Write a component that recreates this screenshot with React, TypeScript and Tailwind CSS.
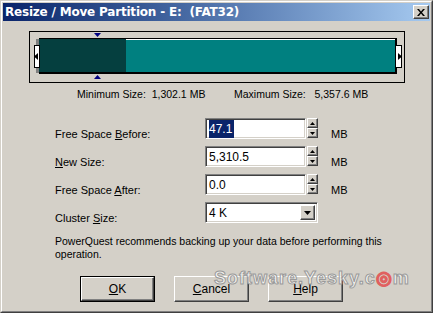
const raised = "border border-t-white border-l-white border-r-[#404040] border-b-[#404040] shadow-[inset_-1px_-1px_0_#808080,inset_1px_1px_0_#d4d0c8]";
const sunken = "border border-t-[#808080] border-l-[#808080] border-r-white border-b-white shadow-[inset_1px_1px_0_#404040,inset_-1px_-1px_0_#d4d0c8]";

const Spinner = () => (
    <div className="flex flex-col ml-[1px]">
        <div className={`${raised} w-[11px] h-[10px] bg-[#d4d0c8] flex items-center justify-center`}>
            <svg width="5" height="3" viewBox="0 0 5 3"><path d="M2.5 0L5 3H0z" fill="#000"/></svg>
        </div>
        <div className={`${raised} w-[11px] h-[10px] bg-[#d4d0c8] flex items-center justify-center`}>
            <svg width="5" height="3" viewBox="0 0 5 3"><path d="M0 0H5L2.5 3z" fill="#000"/></svg>
        </div>
    </div>
);

const SpinRow = ({label, value, selected}: {label: [string, string, string]; value: string; selected?: boolean}) => (
    <div className="flex items-start h-[21px]">
        <div className="w-[150px] mt-[8px]">
            {label[0]}<span className="underline">{label[1]}</span>{label[2]}
        </div>
        <div className={`${sunken} w-[101px] h-[21px] bg-white flex items-center pl-[3px] text-[12px]`}>
            <span className={selected ? "bg-[#0a246a] text-white pr-[2px]" : ""}>{value}</span>
        </div>
        <Spinner/>
        <span className="ml-[13px] mt-[8px]">MB</span>
    </div>
);

const Btn = ({first, rest, def}: {first: string; rest: string; def?: boolean}) => (
    <div className={def ? "border border-black" : ""}>
        <div className={`${raised} ${def ? "w-[73px] h-[24px]" : "w-[75px] h-[26px]"} flex items-center justify-center text-[12px]`}>
            <span className="underline">{first}</span>{rest}
        </div>
    </div>
);

const App = () => {
    return (
        <div className="w-[433px] h-[313px] border border-t-[#d4d0c8] border-l-[#d4d0c8] border-r-[#404040] border-b-[#404040] bg-[#d4d0c8] font-['Liberation_Sans',Arial,sans-serif] text-[11px] text-black relative overflow-hidden">
            <div className="h-full border border-t-white border-l-white border-r-[#808080] border-b-[#808080] p-[1px] flex flex-col">
                {/* title bar */}
                <div className="h-[18px] flex items-center justify-between bg-gradient-to-r from-[#0a246a] to-[#a6caf0] pl-[2px] pr-[1px]">
                    <span className="text-white font-bold text-[12px] font-['DejaVu_Sans',Verdana,sans-serif] tracking-[-0.2px]">Resize / Move Partition - E:&nbsp; (FAT32)</span>
                    <div className={`${raised} bg-[#d4d0c8] w-[16px] h-[14px] flex items-center justify-center`}>
                        <svg width="8" height="7" viewBox="0 0 8 7">
                            <path d="M0 0h2l2 2.5L6 0h2L5 3.5 8 7H6L4 4.5 2 7H0l3-3.5z" fill="#000"/>
                        </svg>
                    </div>
                </div>

                {/* partition bar */}
                <div className="relative ml-[26px] mt-[10px] w-[376px] h-[52px] border border-black">
                    <div className="absolute left-[64px] top-[1px]">
                        <svg width="7" height="4" viewBox="0 0 7 4"><path d="M0 0H7L3.5 4z" fill="#000080"/></svg>
                    </div>
                    <div className="absolute left-[64px] top-[43px]">
                        <svg width="7" height="4" viewBox="0 0 7 4"><path d="M3.5 0L7 4H0z" fill="#000080"/></svg>
                    </div>
                    <div className="absolute left-[4px] top-[13px] w-[6px] h-[23px] bg-white border border-black flex items-center">
                        <svg width="4" height="7" viewBox="0 0 4 7" className="-ml-[1px]"><path d="M0 3.5L4 0V7z" fill="#000"/></svg>
                    </div>
                    <div className="absolute left-[365px] top-[13px] w-[7px] h-[23px] bg-white border border-black flex items-center justify-end">
                        <svg width="4" height="7" viewBox="0 0 4 7" className="-mr-[1px]"><path d="M4 3.5L0 0V7z" fill="#000"/></svg>
                    </div>
                    <div className="ml-[6px] mt-[6px] w-[361px] h-[36px] flex">
                        <div className="w-[3px] bg-[#808080] mt-[1px] mb-[1px]"/>
                        <div className="flex-1 flex border-t border-t-black border-r-2 border-r-black border-b-2 border-b-black">
                            <div className="w-[87px] bg-[#053f3f]"/>
                            <div className="flex-1 bg-[#008080] border-t border-t-white"/>
                        </div>
                    </div>
                </div>

                <div className="flex ml-[74px] mt-[5px] h-[14px] items-center text-[10.5px]">
                    <span className="w-[157px] whitespace-pre">Minimum Size:  1,302.1 MB</span>
                    <span className="whitespace-pre">Maximum Size:   5,357.6 MB</span>
                </div>

                {/* fields */}
                <div className="flex flex-col ml-[52px] mt-[16px] gap-[7px]">
                    <SpinRow label={["Free Space ", "B", "efore:"]} value="47.1" selected/>
                    <SpinRow label={["", "N", "ew Size:"]} value="5,310.5"/>
                    <SpinRow label={["Free Space ", "A", "fter:"]} value="0.0"/>
                    <div className="flex items-start h-[21px]">
                        <div className="w-[150px] mt-[8px]">Cluster <span className="underline">S</span>ize:</div>
                        <div className={`${sunken} w-[113px] h-[21px] bg-white flex items-center justify-between pl-[3px] pr-[2px] text-[12px]`}>
                            <span>4 K</span>
                            <div className={`${raised} bg-[#d4d0c8] w-[15px] h-[15px] flex items-center justify-center`}>
                                <svg width="7" height="4" viewBox="0 0 7 4"><path d="M0 0H7L3.5 4z" fill="#000"/></svg>
                            </div>
                        </div>
                    </div>
                </div>

                <p className="ml-[52px] mt-[12px] leading-[13px] text-[10.5px]">
                    PowerQuest recommends backing up your data before performing this<br/>operation.
                </p>

                <div className="flex ml-[77px] mt-[15px] gap-[19px]">
                    <Btn first="O" rest="K" def/>
                    <Btn first="C" rest="ancel"/>
                    <Btn first="H" rest="elp"/>
                </div>
            </div>

            <div className="absolute left-[213px] top-[268px] text-[18px] font-bold font-['Liberation_Sans',Arial,sans-serif] text-white/70 [-webkit-text-stroke:1px_#9a9a9a] tracking-[1px] leading-none">
                Software.Yesky.c<span className="text-[#f08080] [-webkit-text-stroke:1px_#e06060]">◎</span>m
            </div>
        </div>
    );
};

export default App;
